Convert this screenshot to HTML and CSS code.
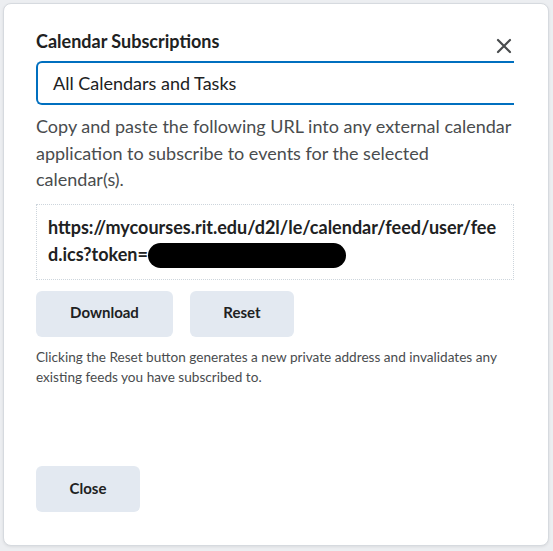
FILE: index.html
```html
<!DOCTYPE html>
<html>
<head>
<meta charset="utf-8">
<link rel="stylesheet" href="styles.css">
</head>
<body>
<div class="backdrop">
  <div class="dialog">
    <div class="header">
      <h1 class="title">Calendar Subscriptions</h1>
      <button class="close-x" aria-label="Close">
        <svg width="16" height="16" viewBox="0 0 16 16"><path d="M2 2 L14 14 M14 2 L2 14" stroke="#494c4e" stroke-width="2.2" stroke-linecap="round" fill="none"/></svg>
      </button>
    </div>
    <div class="select">All Calendars and Tasks</div>
    <p class="desc">Copy and paste the following URL into any external calendar application to subscribe to events for the selected calendar(s).</p>
    <div class="urlbox">https://mycourses.rit.edu/d2l/le/calendar/feed/user/feed.ics?token=<span class="redact"></span></div>
    <div class="actions">
      <button class="btn btn-download">Download</button>
      <button class="btn btn-reset">Reset</button>
    </div>
    <p class="note">Clicking the Reset button generates a new private address and invalidates any existing feeds you have subscribed to.</p>
    <div class="footer">
      <button class="btn btn-close">Close</button>
    </div>
  </div>
</div>
</body>
</html>
```
FILE: styles.css
```css
html, body {
  margin: 0;
  padding: 0;
}
body {
  width: 553px;
  height: 551px;
  overflow: hidden;
  background: #eceef1;
  font-family: Lato, "Open Sans", sans-serif;
}
.backdrop {
  padding: 3px 0 0 3px;
}
.dialog {
  box-sizing: border-box;
  width: 546px;
  height: 543px;
  background: #fff;
  border: 1px solid #d6dadf;
  border-radius: 8px;
  box-shadow: 0 1px 3px rgba(0,0,0,0.08);
  padding: 0 0 0 32px;
  display: flex;
  flex-direction: column;
  overflow: hidden;
}
.header {
  display: flex;
  align-items: flex-start;
  justify-content: space-between;
  width: 478px;
  padding-top: 26px;
  height: 31px;
}
.title {
  margin: 0;
  font-size: 18px;
  font-weight: 700;
  color: #202122;
  line-height: 22px;
}
.close-x {
  border: 0;
  background: none;
  padding: 0;
  margin: 8px 2px 0 0;
  width: 16px;
  height: 16px;
  display: flex;
}
.select {
  box-sizing: border-box;
  width: 478px;
  height: 44px;
  border: 2px solid #006fbf;
  border-right: 0;
  border-radius: 6px 0 0 6px;
  padding-left: 15px;
  font-size: 18px;
  line-height: 40px;
  color: #202122;
}
.desc {
  margin: 8px 0 0 0;
  width: 480px;
  font-size: 18px;
  line-height: 26.5px;
  color: #494c4e;
}
.urlbox {
  box-sizing: border-box;
  margin-top: 11px;
  width: 478px;
  height: 76px;
  border: 1px dotted #cdd5dc;
  padding: 9px 11px 0 11px;
  font-size: 18px;
  font-weight: 700;
  line-height: 27px;
  color: #202122;
  word-break: break-all;
}
.redact {
  display: inline-block;
  width: 198px;
  height: 25px;
  background: #000;
  border-radius: 13px;
  vertical-align: -7px;
}
.actions {
  display: flex;
  gap: 17px;
  margin-top: 11px;
}
.btn {
  border: 0;
  border-radius: 6px;
  background: #e3e9f1;
  font-family: Lato, "Open Sans", sans-serif;
  font-size: 15px;
  font-weight: 700;
  color: #202122;
  height: 46px;
  padding: 0 0 3px 0;
}
.btn-download { width: 137px; }
.btn-reset { width: 104px; }
.btn-close { width: 104px; }
.note {
  margin: 10px 0 0 0;
  width: 480px;
  font-size: 13.6px;
  line-height: 20px;
  color: #494c4e;
}
.footer {
  margin-top: auto;
  padding-bottom: 33px;
}
```
